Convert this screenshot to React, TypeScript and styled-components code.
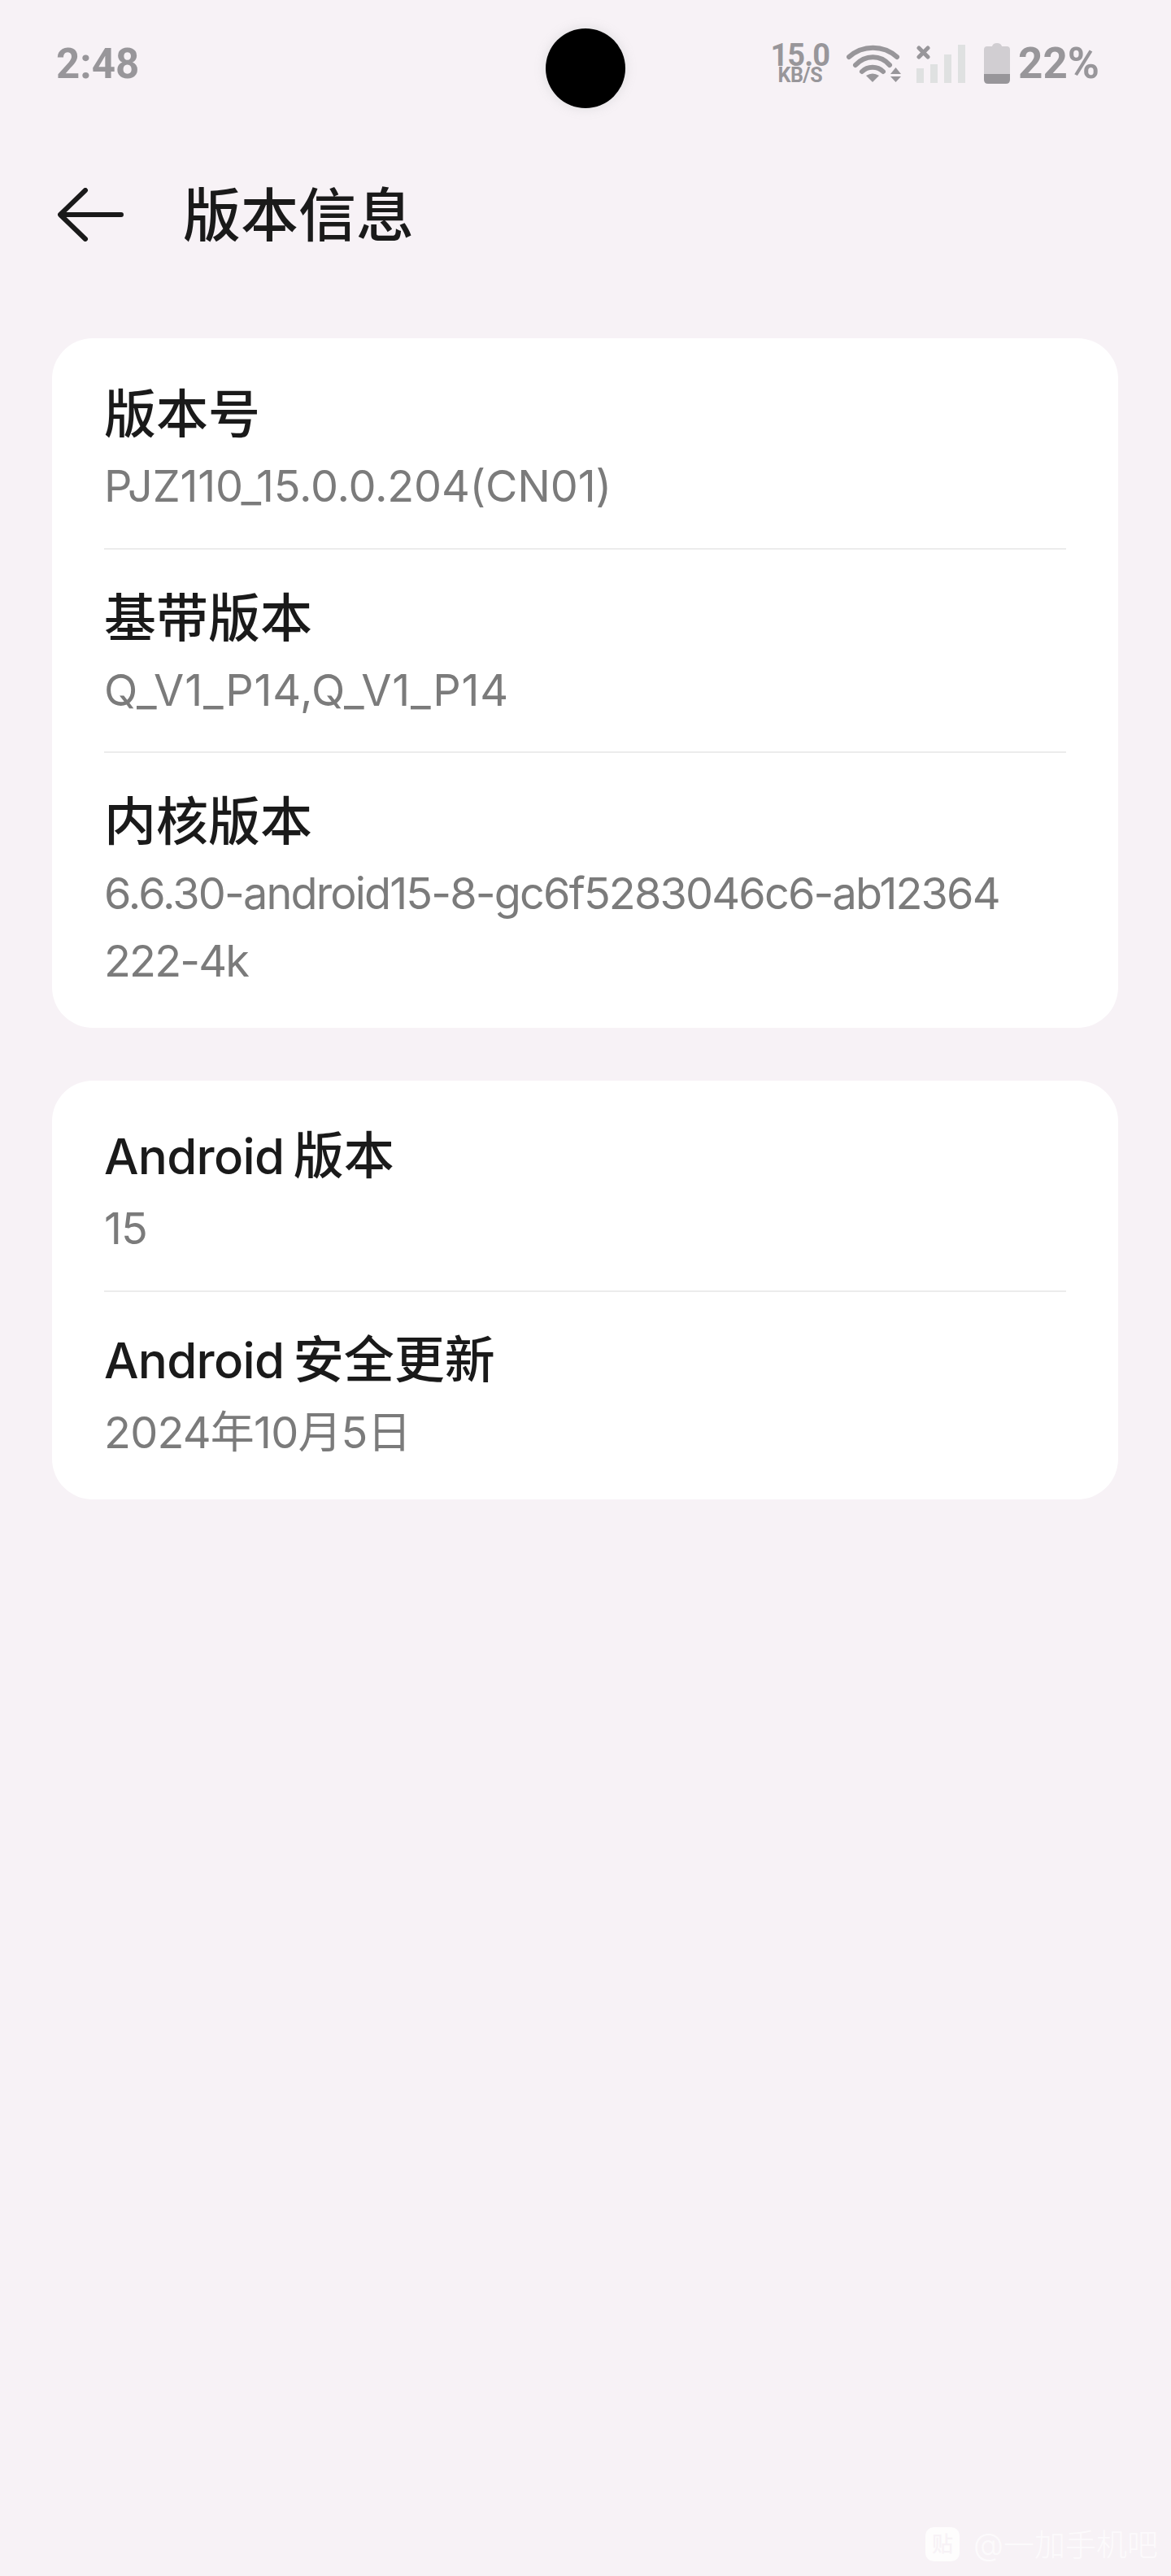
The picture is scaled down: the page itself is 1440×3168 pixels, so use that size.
import React from "react";
import styled, { createGlobalStyle } from "styled-components";

const Global = createGlobalStyle`
  html, body { margin: 0; padding: 0; background: #f7f2f6; }
  * { box-sizing: border-box; }
`;

const CJK = `"Inter", "Noto Sans CJK SC", sans-serif`;

const Page = styled.div`
  position: relative;
  width: 1440px;
  height: 3168px;
  background: #f7f2f6;
  font-family: ${CJK};
  overflow: hidden;
`;

const StatusBar = styled.div`
  height: 156px;
  padding: 0 88px 0 69px;
  display: flex;
  align-items: center;
  justify-content: space-between;
  color: #98969a;
  font-family: "Roboto", sans-serif;
  font-weight: 700;
`;

const Time = styled.span`
  font-size: 51px;
  line-height: 1;
`;

const Camera = styled.div`
  position: absolute;
  left: 671px;
  top: 35px;
  width: 98px;
  height: 98px;
  border-radius: 50%;
  background: #000;
  box-shadow: 0 0 14px rgba(150, 160, 160, 0.25);
`;

const StatusRight = styled.div`
  display: flex;
  align-items: center;
`;

const Slot = styled.div<{ $gap: number }>`
  margin-left: ${(p) => p.$gap}px;
  display: flex;
  flex-direction: column;
  align-items: center;
`;

const SpeedValue = styled.span`
  font-size: 38px;
  line-height: 30px;
  letter-spacing: -1px;
`;

const SpeedUnit = styled.span`
  font-size: 25px;
  line-height: 20px;
  letter-spacing: -0.5px;
`;

const Percent = styled.span`
  font-size: 53px;
  line-height: 1;
`;

const Header = styled.header`
  height: 216px;
  padding-left: 71px;
  display: flex;
  align-items: center;
  gap: 73px;
`;

const Title = styled.h1`
  margin: 0;
  font-size: 71px;
  line-height: 80px;
  font-weight: 500;
  color: #1a1a1a;
`;

const Main = styled.main`
  padding: 44px 65px 0 64px;
  display: flex;
  flex-direction: column;
  gap: 65px;
`;

const Card = styled.section`
  background: #fff;
  border-radius: 50px;
  padding: 8px 64px 7px;
  display: flex;
  flex-direction: column;
`;

const Row = styled.div`
  padding: 50px 0 35px;
  & + & {
    padding: 49px 0 34px;
    border-top: 2px solid #ececec;
  }
`;

const Label = styled.div<{ $compact: boolean }>`
  font-size: ${(p) => (p.$compact ? 62 : 64)}px;
  line-height: 70px;
  font-weight: 500;
  color: #1a1a1a;
`;

const Latin = styled.span`
  font-size: 60px;
  letter-spacing: -0.7px;
  word-spacing: -4px;
`;

const Value = styled.div<{ $spacing: number }>`
  margin-top: 12px;
  font-size: 54px;
  line-height: 83px;
  letter-spacing: ${(p) => p.$spacing}px;
  color: #7b7b7b;
  white-space: pre-line;
`;

const Watermark = styled.div`
  position: absolute;
  left: 1138px;
  top: 3108px;
  display: flex;
  align-items: center;
  gap: 17px;
  color: rgba(255, 255, 255, 0.7);
`;

const MarkIcon = styled.div`
  width: 42px;
  height: 42px;
  border-radius: 10px;
  background: rgba(255, 255, 255, 0.8);
  color: #f7f2f6;
  font-size: 26px;
  line-height: 42px;
  text-align: center;
  font-weight: 500;
`;

const MarkText = styled.span`
  font-size: 38px;
  line-height: 42px;
  font-weight: 300;
`;

type Item = { latin?: string; label: string; value: string; spacing: number };

const rows1: Item[] = [
  { label: "版本号", value: "PJZ110_15.0.0.204(CN01)", spacing: -0.2 },
  { label: "基带版本", value: "Q_V1_P14,Q_V1_P14", spacing: 0.8 },
  {
    label: "内核版本",
    value: "6.6.30-android15-8-gc6f5283046c6-ab12364\n222-4k",
    spacing: -1.85,
  },
];
const rows2: Item[] = [
  { latin: "Android ", label: "版本", value: "15", spacing: -1 },
  { latin: "Android ", label: "安全更新", value: "2024年10月5日", spacing: -0.8 },
];

const Wifi = () => (
  <svg width="68" height="46" viewBox="0 0 68 46" fill="none">
    <g stroke="#98969a" strokeWidth="6" strokeLinecap="round">
      <path d="M3 15C20 0 45 0 62 15" />
      <path d="M11 25C23 12 42 12 53 25" />
      <path d="M19 33C26 26 38 26 45 33" />
    </g>
    <path d="M24 38Q32 33 40 38L32 46Z" fill="#98969a" />
    <path d="M54 36H67L60.500 28ZM54 39H67L60.500 46Z" fill="#98969a" />
  </svg>
);

const Signal = () => (
  <svg width="60" height="47" viewBox="0 0 60 47">
    <g fill="#dfe1e1">
      <rect x="0" y="29" width="9" height="18" />
      <rect x="17" y="24" width="9" height="23" />
      <rect x="34" y="12" width="9" height="35" />
      <rect x="51" y="0" width="9" height="47" />
    </g>
    <path d="M3 4L14 15M14 4L3 15" stroke="#98969a" strokeWidth="5" strokeLinecap="round" />
  </svg>
);

const Battery = () => (
  <svg width="32" height="50" viewBox="0 0 32 50">
    <path d="M4 4H10Q11 0 16 0T22 4H28Q32 4 32 8V38H0V8Q0 4 4 4Z" fill="#d1ced2" />
    <path d="M0 38H32V45Q32 50 27 50H5Q0 50 0 45Z" fill="#98969a" />
  </svg>
);

const BackArrow = () => (
  <svg width="81" height="66" viewBox="0 0 81 66" fill="none">
    <path
      d="M34 3L3 33L34 63M4 33H78"
      stroke="#1a1a1a"
      strokeWidth="6"
      strokeLinecap="round"
      strokeLinejoin="round"
    />
  </svg>
);

const InfoCard = ({ items }: { items: Item[] }) => (
  <Card>
    {items.map((r) => (
      <Row key={r.label}>
        <Label $compact={Boolean(r.latin)}>
          {r.latin && <Latin>{r.latin}</Latin>}
          {r.label}
        </Label>
        <Value $spacing={r.spacing}>{r.value}</Value>
      </Row>
    ))}
  </Card>
);

export default function App() {
  return (
    <Page>
      <Global />
      <StatusBar>
        <Time>2:48</Time>
        <StatusRight>
          <Slot $gap={0}>
            <SpeedValue>15.0</SpeedValue>
            <SpeedUnit>KB/S</SpeedUnit>
          </Slot>
          <Slot $gap={21}>
            <Wifi />
          </Slot>
          <Slot $gap={18}>
            <Signal />
          </Slot>
          <Slot $gap={23}>
            <Battery />
          </Slot>
          <Slot $gap={10}>
            <Percent>22%</Percent>
          </Slot>
        </StatusRight>
      </StatusBar>
      <Camera />
      <Header>
        <BackArrow />
        <Title>版本信息</Title>
      </Header>
      <Main>
        <InfoCard items={rows1} />
        <InfoCard items={rows2} />
      </Main>
      <Watermark>
        <MarkIcon>贴</MarkIcon>
        <MarkText>@一加手机吧</MarkText>
      </Watermark>
    </Page>
  );
}
